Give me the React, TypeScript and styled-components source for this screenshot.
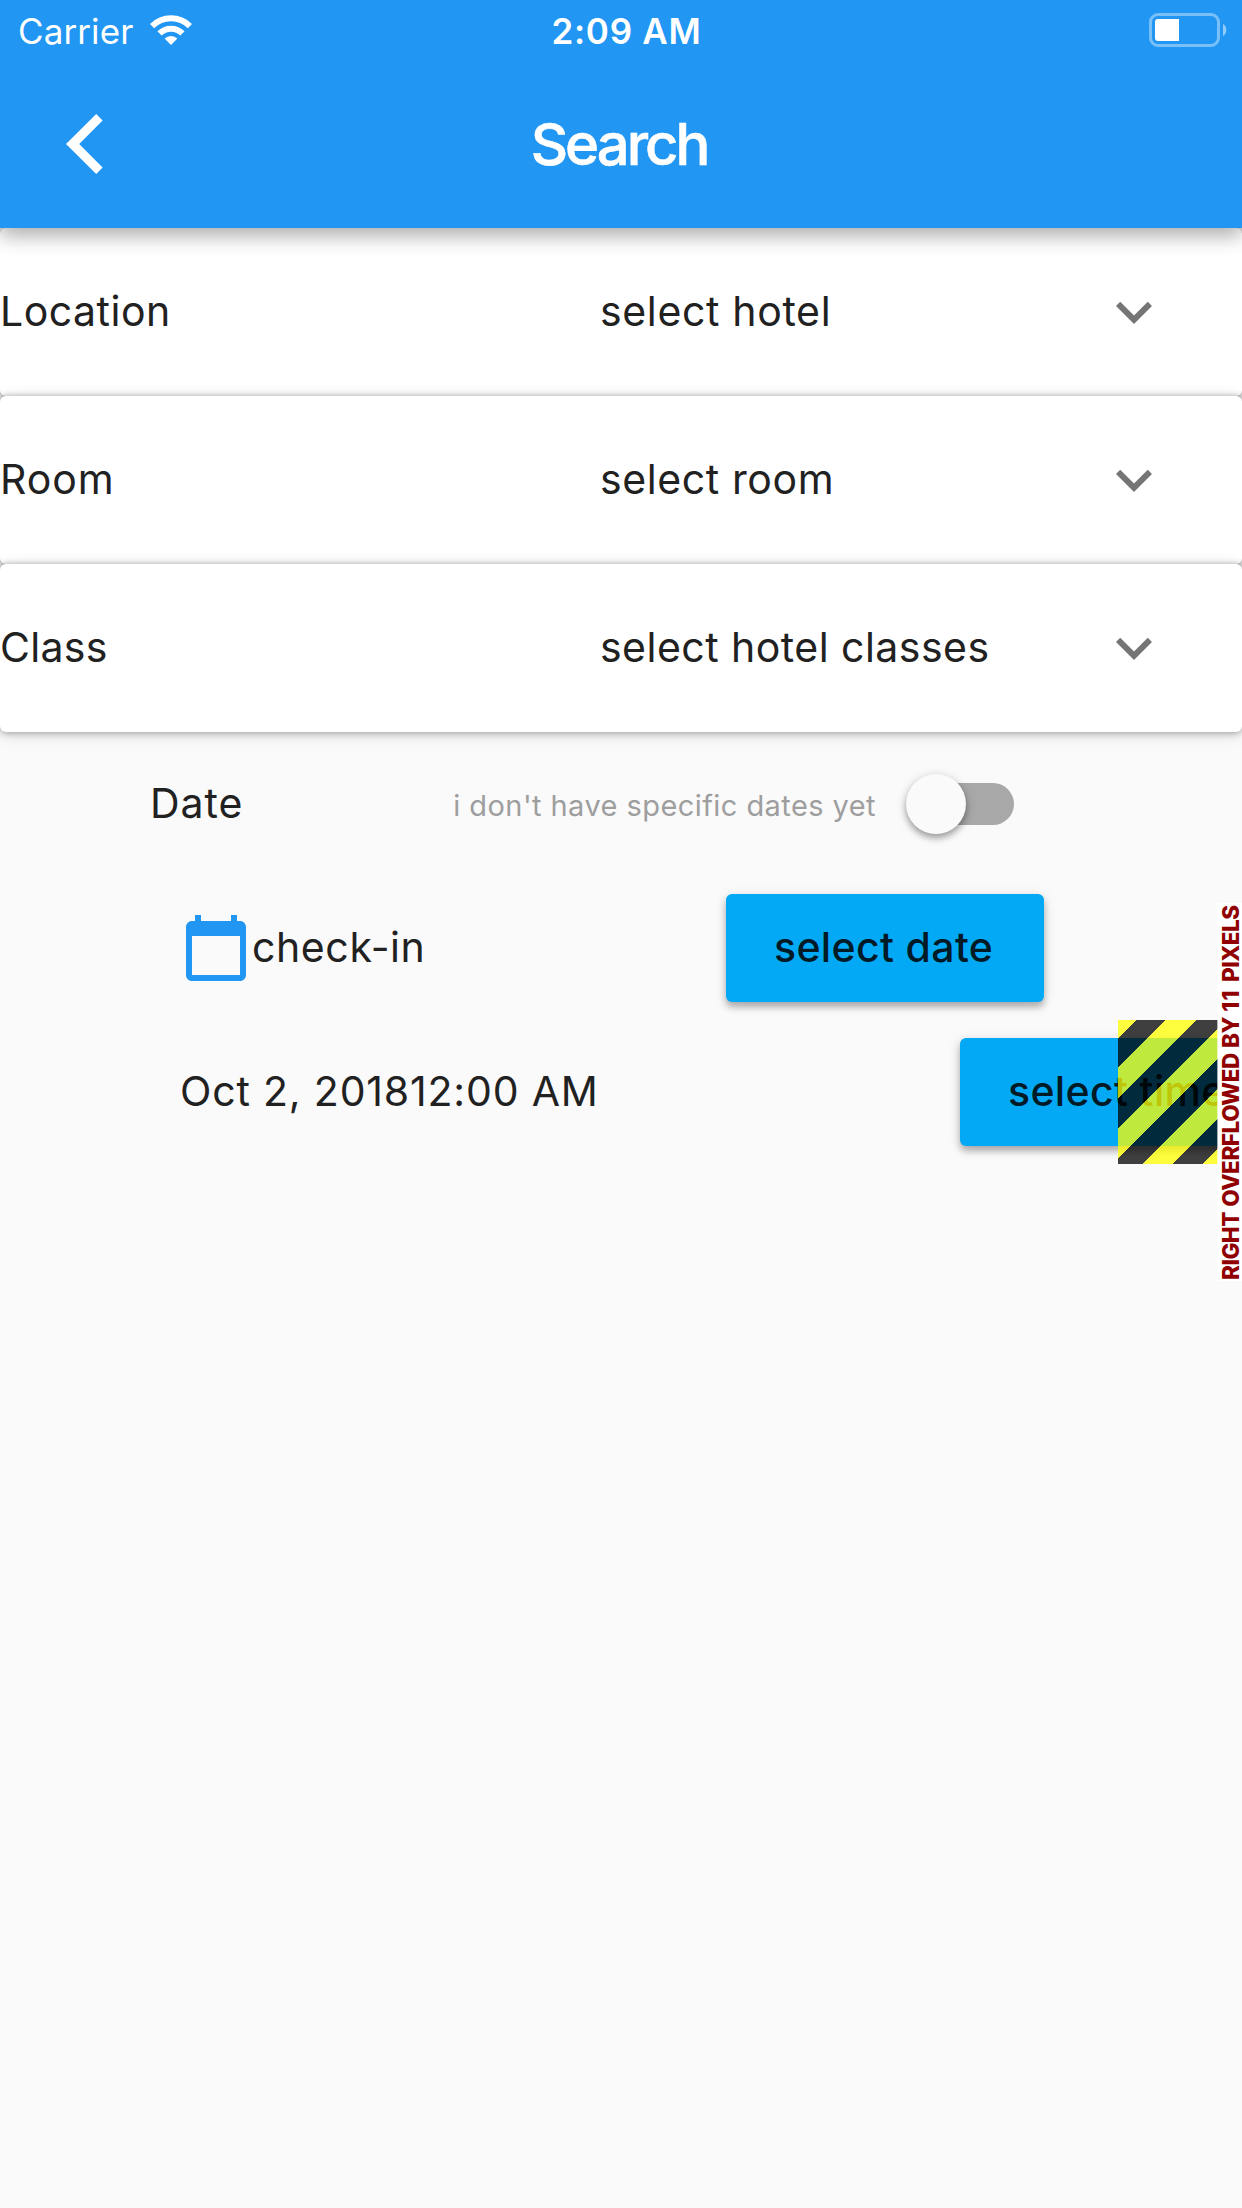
import React from "react";
import styled, { createGlobalStyle } from "styled-components";

const GlobalStyle = createGlobalStyle`
  * {
    box-sizing: border-box;
  }
  body {
    margin: 0;
    background: #fafafa;
    color: #212121;
    font-family: Inter, "Liberation Sans", sans-serif;
  }
`;

const Screen = styled.div`
  position: relative;
  width: 1242px;
  height: 2208px;
  overflow: hidden;
  background: #fafafa;
`;

const Header = styled.header`
  position: relative;
  z-index: 1;
  height: 228px;
  background: #2196f3;
  color: #fff;
  box-shadow: 0 8px 18px rgba(0, 0, 0, 0.26), 0 3px 26px rgba(0, 0, 0, 0.1);
`;

const StatusBar = styled.div`
  display: grid;
  grid-template-columns: 1fr auto 1fr;
  height: 60px;
  padding: 2px 15px 0 18px;
  align-items: center;
`;

const Carrier = styled.div`
  display: flex;
  align-items: center;
  gap: 17px;
  font-size: 35px;
  letter-spacing: 0.1px;
`;

const Clock = styled.time`
  margin-left: 8px;
  font-size: 35px;
  font-weight: 560;
  letter-spacing: 0.74px;
`;

const BatteryIcon = styled.svg`
  justify-self: end;
  width: 78px;
  height: 34px;
  margin-bottom: 2px;
`;

const WifiIcon = styled.svg`
  width: 42px;
  height: 30px;
  margin-bottom: 3px;
`;

const Toolbar = styled.div`
  display: grid;
  grid-template-columns: 168px 1fr 168px;
  align-items: center;
  height: 168px;
`;

const BackButton = styled.button`
  display: flex;
  width: 168px;
  height: 168px;
  padding: 0 0 0 66px;
  align-items: center;
  border: 0;
  background: none;
  color: inherit;
`;

const Title = styled.h1`
  margin: 0 4px 0 0;
  font-size: 58px;
  font-weight: 550;
  letter-spacing: -3px;
  text-align: center;
  -webkit-text-stroke: 0.6px #fff;
`;

const Card = styled.section`
  display: grid;
  grid-template-columns: 600px 1fr 72px;
  align-items: center;
  height: 168px;
  padding-right: 72px;
  border-radius: 6px;
  background: #fff;
  box-shadow: 0 0 6px rgba(0, 0, 0, 0.28), 0 3px 8px rgba(0, 0, 0, 0.1), 0 3px 18px rgba(0, 0, 0, 0.1);
`;

const Label = styled.span<{ $tracking?: number }>`
  padding-bottom: 2px;
  font-size: 41px;
  line-height: 50px;
  letter-spacing: ${(p) => p.$tracking ?? 0.6}px;
  white-space: nowrap;
`;

const Row = styled.div<{ $start: number }>`
  display: flex;
  align-items: center;
  height: 144px;
  padding-left: ${(p) => p.$start}px;
`;

const Hint = styled.span`
  margin-left: auto;
  padding-top: 3px;
  color: #9e9e9e;
  font-size: 29px;
  letter-spacing: 0.43px;
  white-space: nowrap;
`;

const SwitchTrack = styled.button`
  display: flex;
  align-items: center;
  width: 99px;
  height: 42px;
  margin: 0 228px 0 39px;
  padding: 0;
  border: 0;
  border-radius: 21px;
  background: #a8a8a8;
`;

const SwitchThumb = styled.span`
  flex: none;
  width: 60px;
  height: 60px;
  margin-left: -9px;
  border-radius: 50%;
  background: #fafafa;
  box-shadow: 0 4px 6px rgba(0, 0, 0, 0.3), 0 2px 12px rgba(0, 0, 0, 0.14);
`;

const RaisedButton = styled.button<{ $end: number }>`
  flex: none;
  width: 318px;
  height: 108px;
  margin: 0 ${(p) => p.$end}px 0 auto;
  padding: 0 0 3px 48px;
  border: 0;
  border-radius: 6px;
  background: #03a9f4;
  color: rgba(0, 0, 0, 0.87);
  font: 500 41px Inter, "Liberation Sans", sans-serif;
  letter-spacing: 0.35px;
  text-align: left;
  white-space: nowrap;
  box-shadow: 0 5px 6px rgba(0, 0, 0, 0.24), 0 3px 13px rgba(0, 0, 0, 0.14);
`;

const OverflowStripes = styled.div`
  position: absolute;
  top: 1020px;
  right: 0;
  width: 124.2px;
  height: 144px;
  background: repeating-linear-gradient(
    135deg,
    rgba(255, 255, 0, 0.75) 0 12.73px,
    rgba(0, 0, 0, 0.75) 12.73px 33.94px,
    rgba(255, 255, 0, 0.75) 33.94px 42.43px
  );
`;

const OverflowLabel = styled.div`
  position: absolute;
  top: 903px;
  right: 0;
  width: 25.4px;
  height: 378px;
  padding-top: 1px;
  padding-right: 2px;
  background: #fff;
  color: #900000;
  font-size: 22.5px;
  font-weight: 800;
  line-height: 23px;
  letter-spacing: -0.46px;
  word-spacing: 0.8px;
  white-space: nowrap;
  writing-mode: vertical-rl;
  transform: rotate(180deg);
`;

const OverflowAmount = styled.span`
  letter-spacing: 1.4px;
`;

const fields = [
  { label: "Location", value: "select hotel", labelTracking: 0.5, valueTracking: 0.65 },
  { label: "Room", value: "select room", labelTracking: 0.9, valueTracking: 0.6 },
  { label: "Class", value: "select hotel classes", labelTracking: 0.3, valueTracking: 0.47 },
];

function Wifi() {
  return (
    <WifiIcon viewBox="0 0 42 30" fill="none" stroke="#fff" strokeWidth="6">
      <path d="M2.1 11.2a26.7 26.7 0 0 1 37.8 0" />
      <path d="M9.5 18.4a16.3 16.3 0 0 1 23 0" />
      <path d="M14.6 23.6a9 9 0 0 1 12.8 0L21 30z" fill="#fff" stroke="none" />
    </WifiIcon>
  );
}

function Battery() {
  return (
    <BatteryIcon viewBox="0 0 78 34">
      <rect x="1.5" y="1.5" width="68" height="31" rx="7.5" fill="none" stroke="#fff" strokeOpacity="0.4" strokeWidth="3" />
      <path d="M9 6h21v22H9a3 3 0 0 1-3-3V9a3 3 0 0 1 3-3z" fill="#fff" />
      <path d="M74 11a7 7 0 0 1 0 12z" fill="#fff" fillOpacity="0.5" />
    </BatteryIcon>
  );
}

export default function App() {
  return (
    <Screen>
      <GlobalStyle />
      <Header>
        <StatusBar>
          <Carrier>
            Carrier
            <Wifi />
          </Carrier>
          <Clock>2:09 AM</Clock>
          <Battery />
        </StatusBar>
        <Toolbar>
          <BackButton aria-label="Back">
            <svg width="37" height="60" viewBox="0 0 37 60" fill="#fff">
              <path d="M30.2 0L0 30l30.2 30 6.4-6.4L13.2 30 36.6 6.4z" />
            </svg>
          </BackButton>
          <Title>Search</Title>
        </Toolbar>
      </Header>
      {fields.map((f) => (
        <Card key={f.label}>
          <Label $tracking={f.labelTracking}>{f.label}</Label>
          <Label $tracking={f.valueTracking}>{f.value}</Label>
          <svg width="72" height="72" viewBox="0 0 24 24" fill="#757575">
            <path d="M16.59 8.59L12 13.17 7.41 8.59 6 10l6 6 6-6z" />
          </svg>
        </Card>
      ))}
      <Row $start={150}>
        <Label $tracking={1}>Date</Label>
        <Hint>i don't have specific dates yet</Hint>
        <SwitchTrack role="switch" aria-checked="false">
          <SwitchThumb />
        </SwitchTrack>
      </Row>
      <Row $start={180}>
        <svg width="72" height="72" viewBox="0 0 24 24" fill="#2196f3">
          <path d="M20 3h-1V1h-2v2H7V1H5v2H4c-1.1 0-2 .9-2 2v16c0 1.1.9 2 2 2h16c1.1 0 2-.9 2-2V5c0-1.1-.9-2-2-2zm0 18H4V8h16v13z" />
        </svg>
        <Label $tracking={0.6}>check-in</Label>
        <RaisedButton $end={198}>select date</RaisedButton>
      </Row>
      <Row $start={180}>
        <Label $tracking={0.82}>Oct 2, 201812:00 AM</Label>
        <RaisedButton $end={-36}>select time</RaisedButton>
      </Row>
      <OverflowStripes />
      <OverflowLabel>
        RIGHT OVERFLOWED BY <OverflowAmount>11 </OverflowAmount>PIXELS
      </OverflowLabel>
    </Screen>
  );
}
